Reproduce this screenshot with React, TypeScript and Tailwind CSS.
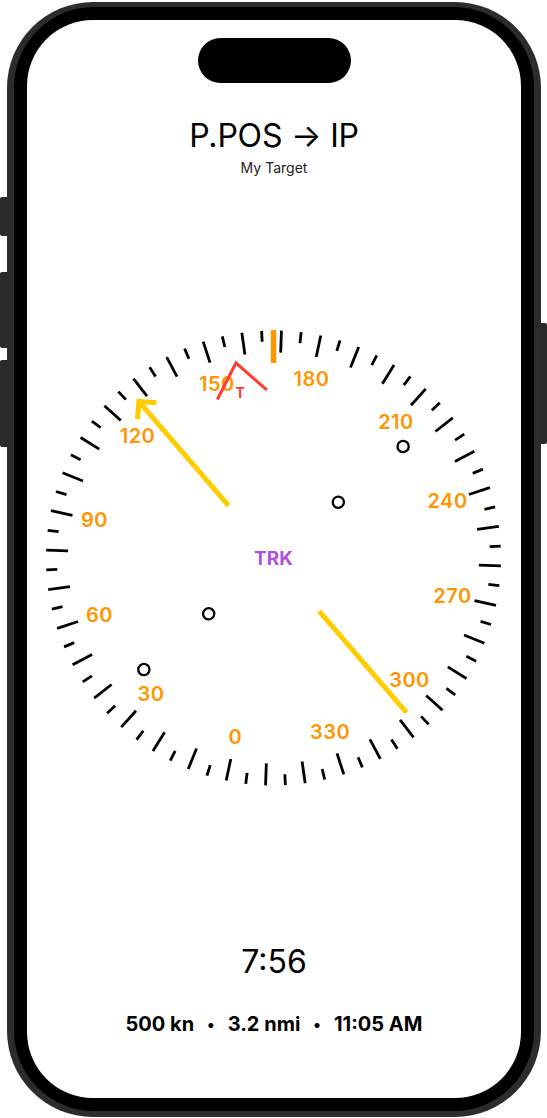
const HEADING = 168;
const COURSE_ROT = -40.7;
const BUG_ROT = -10.9;

// dial centre inside the svg
const CX = 246.5;
const CY = 240;

const polar = (r: number, deg: number) => {
  const a = (deg * Math.PI) / 180;
  return [CX + r * Math.sin(a), CY - r * Math.cos(a)];
};

const ticks = Array.from({ length: 72 }, (_, i) => i * 5);
const labels = Array.from({ length: 12 }, (_, i) => i * 30);

function Dial() {
  return (
    <svg width={494} height={480} viewBox="0 0 494 480" className="block">
      {ticks.map((v) => {
        const long = v % 10 === 0;
        const ang = v - HEADING;
        const [x1, y1] = polar(227.5, ang);
        const [x2, y2] = polar(long ? 205.5 : 216.5, ang);
        return <line key={v} x1={x1} y1={y1} x2={x2} y2={y2} stroke="#000" strokeWidth={2.8} />;
      })}

      {labels.map((v) => {
        const [x, y] = polar(183, v - HEADING);
        return (
          <text
            key={v}
            x={x}
            y={y + 7}
            textAnchor="middle"
            fill="#FF9500"
            fontSize={20}
            fontWeight={600}
            letterSpacing={0.5}
            fontFamily="Inter, 'Liberation Sans', sans-serif"
          >
            {v}
          </text>
        );
      })}

      {/* heading marker */}
      <line x1={CX} y1={CY - 228} x2={CX} y2={CY - 195} stroke="#FF9500" strokeWidth={5.5} />

      {/* course needle + deviation dots */}
      <g transform={`rotate(${COURSE_ROT} ${CX} ${CY})`}>
        <line x1={CX} y1={CY - 69} x2={CX} y2={CY - 205} stroke="#FFCC00" strokeWidth={5} />
        <polyline
          points={`${CX - 12.5},${CY - 194} ${CX},${CY - 206.5} ${CX + 12.5},${CY - 194}`}
          fill="none"
          stroke="#FFCC00"
          strokeWidth={5}
          strokeLinejoin="miter"
        />
        <line x1={CX} y1={CY + 70} x2={CX} y2={CY + 204} stroke="#FFCC00" strokeWidth={5} />
        {[-171, -85.5, 85.5, 171].map((d) => (
          <circle key={d} cx={CX + d} cy={CY} r={5.6} fill="none" stroke="#000" strokeWidth={2.3} />
        ))}
      </g>

      {/* target bug */}
      <g transform={`rotate(${BUG_ROT} ${CX} ${CY})`}>
        <polyline
          points={`${CX - 25.2},${CY - 166.3} ${CX},${CY - 198.6} ${CX + 25.2},${CY - 166.3}`}
          fill="none"
          stroke="#FF3B30"
          strokeWidth={3}
        />
      </g>
      <text
        x={CX - 33.4}
        y={CY - 165.7 + 5.5}
        textAnchor="middle"
        fill="#FF3B30"
        fontSize={14}
        fontWeight={700}
        fontFamily="Inter, 'Liberation Sans', sans-serif"
      >
        T
      </text>

      <text
        x={CX}
        y={CY + 7}
        textAnchor="middle"
        fill="#AF52DE"
        fontSize={19}
        fontWeight={700}
        fontFamily="Inter, 'Liberation Sans', sans-serif"
      >
        TRK
      </text>
    </svg>
  );
}

export default function App() {
  return (
    <div className="relative w-[547px] h-[1118px] overflow-hidden bg-white font-['Inter','Liberation_Sans',sans-serif] text-black">
      {/* side buttons */}
      <div className="absolute left-0 top-[197px] w-[9px] h-[39px] rounded-l-[2px] bg-[#2a2a2a]" />
      <div className="absolute left-0 top-[272px] w-[9px] h-[76px] rounded-l-[2px] bg-[#2a2a2a]" />
      <div className="absolute left-0 top-[360px] w-[9px] h-[87px] rounded-l-[2px] bg-[#2a2a2a]" />
      <div className="absolute left-[538px] top-[323px] w-[9px] h-[121px] rounded-r-[2px] bg-[#2a2a2a]" />

      <div className="relative ml-[7px] mt-[2px] w-[534px] h-[1115px] rounded-[86px] bg-[#2c2c2c] px-[7px] pt-[5px] pb-[6px]">
        <div className="h-full w-full rounded-[80px] bg-black p-[13px]">
          <div className="flex h-full w-full flex-col items-center overflow-hidden rounded-[66px] bg-white">
            <div className="mt-[18px] h-[45px] w-[153px] rounded-full bg-black" />

            <div className="mt-[37px] text-[32px] leading-[32px] font-normal tracking-[-0.2px]">P.POS → IP</div>
            <div className="mt-[9px] text-[14px] leading-[14px] text-[#222]">My Target</div>

            <div className="mt-[143px]">
              <Dial />
            </div>

            <div className="mt-[148px] text-[32px] leading-[32px] font-normal">7:56</div>

            <div className="mt-[36px] flex items-center gap-[13px] text-[20px] leading-[20px] font-bold">
              <span>500 kn</span>
              <span className="text-[16px]">•</span>
              <span>3.2 nmi</span>
              <span className="text-[16px]">•</span>
              <span>11:05 AM</span>
            </div>
          </div>
        </div>
      </div>
    </div>
  );
}
